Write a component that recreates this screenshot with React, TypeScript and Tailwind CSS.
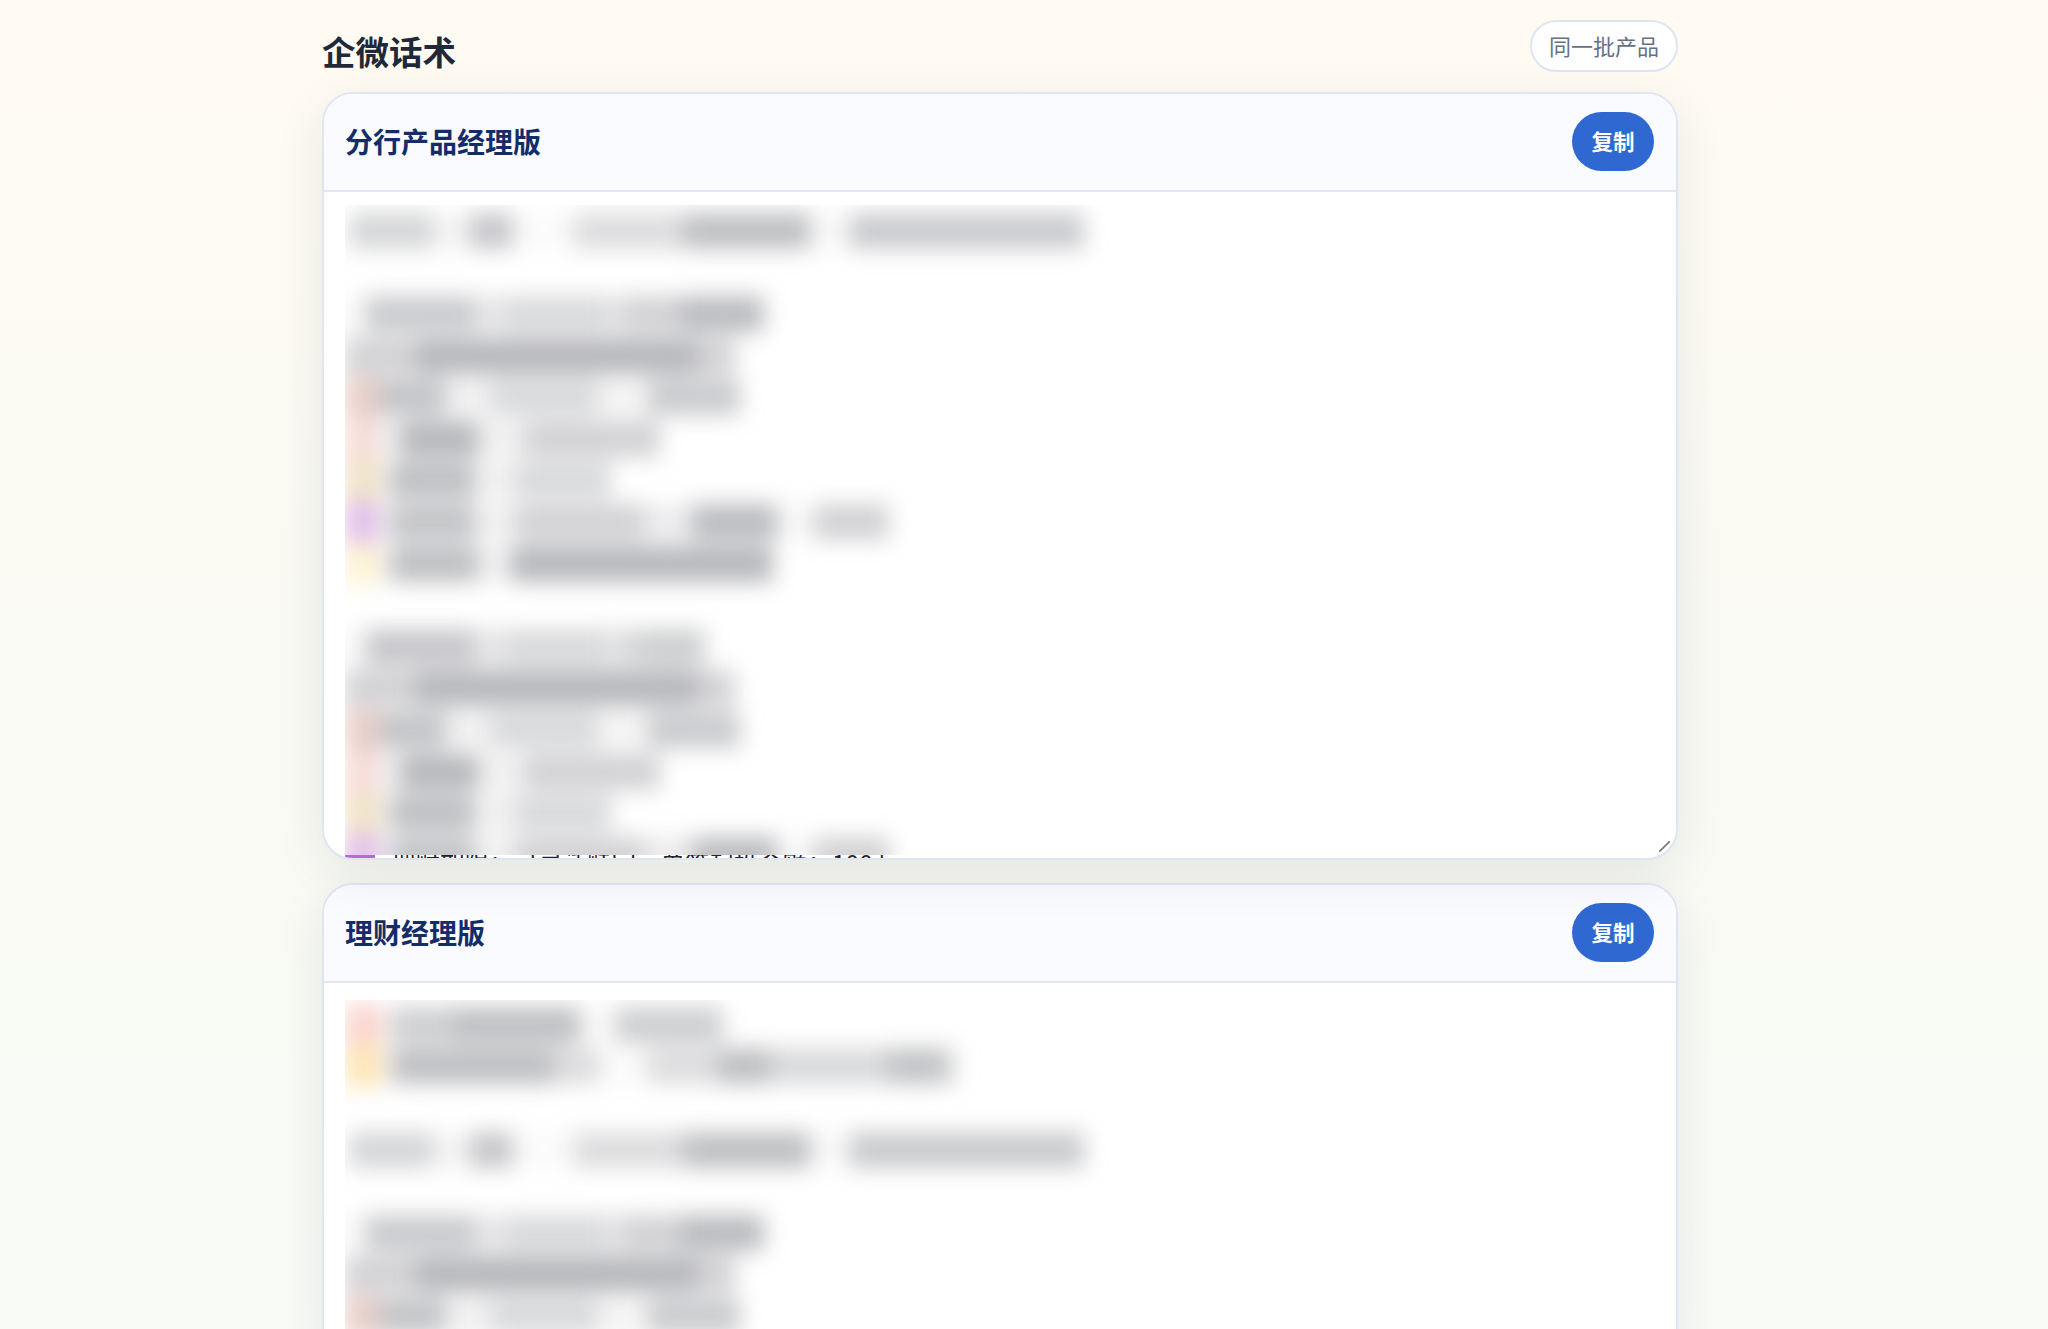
type Seg = [number, number, string?];

const headA: Seg[][] = [
  [[21, 0.1], [108, 0.7], [33, 0.35], [100, 0.5], [16, 0.35], [58, 0.6], [83, 0.9]],
  [[71, 0.6], [282, 0.95], [37, 0.6]],
  [[34, 0.1, "#e8cfc9"], [66, 0.8], [46, 0.2], [107, 0.5], [50, 0.15], [92, 0.7]],
  [[34, 0, "#f8dcd9"], [21, 0.2], [78, 0.95], [46, 0.2], [136, 0.6]],
  [[34, 0, "#f0e3c6"], [12, 0.2], [83, 0.85], [41, 0.2], [96, 0.5]],
  [[34, 0, "#e2bfea"], [12, 0.15], [84, 0.8], [40, 0.2], [129, 0.6], [48, 0.25], [85, 0.9], [37, 0.1], [75, 0.6]],
  [[34, 0, "#fdf3d3"], [12, 0.15], [87, 0.85], [33, 0.2], [262, 0.95]],
];

const headB: Seg[][] = [
  [[21, 0.1], [108, 0.75], [33, 0.35], [100, 0.5], [16, 0.35], [22, 0.55], [60, 0.65]],
  [[71, 0.6], [282, 0.95], [37, 0.6]],
  [[34, 0.1, "#e8cfc9"], [66, 0.8], [46, 0.2], [107, 0.5], [50, 0.15], [92, 0.7]],
  [[34, 0, "#f8dcd9"], [21, 0.2], [78, 0.95], [46, 0.2], [136, 0.6]],
  [[34, 0, "#f0e3c6"], [12, 0.2], [83, 0.85], [41, 0.2], [96, 0.5]],
  [[34, 0, "#e2bfea"], [12, 0.15], [84, 0.8], [40, 0.2], [129, 0.6], [48, 0.25], [85, 0.9], [37, 0.1], [75, 0.6]],
];

const firstLine: Seg[] = [[5, 0], [83, 0.55], [37, 0.15], [43, 0.75], [60, 0.05], [110, 0.45], [127, 0.85], [40, 0.1], [234, 0.7]];

const rows1: Seg[][] = [firstLine, [], ...headA, [], ...headB];

const rows2: Seg[][] = [
  [[37, 0, "#fbd5cf"], [10, 0.1], [61, 0.65], [127, 0.85], [36, 0.1], [107, 0.65]],
  [[37, 0, "#fde6b6"], [10, 0.1], [163, 0.85], [45, 0.45], [47, 0.05], [71, 0.45], [52, 0.85], [116, 0.5], [62, 0.8], [10, 0.3]],
  [],
  firstLine,
  [],
  [[21, 0.1], [108, 0.7], [33, 0.35], [100, 0.5], [16, 0.35], [58, 0.6], [83, 0.9]],
  [[71, 0.6], [282, 0.95], [37, 0.6]],
  [[34, 0.1, "#e8cfc9"], [66, 0.8], [46, 0.2], [107, 0.5], [50, 0.15], [92, 0.7]],
];

function Rows({ rows }: { rows: Seg[][] }) {
  return (
    <div className="blur-[11px]">
      {rows.map((r, i) => (
        <div key={i} className="flex h-[41.6px] items-center">
          {r.map(([w, a, c], j) => (
            <span
              key={j}
              className={c ? "h-[42px]" : "h-[36px]"}
              style={{ width: w, background: c ?? `rgba(110,112,120,${a * 0.52})` }}
            />
          ))}
        </div>
      ))}
    </div>
  );
}

function Header({ title }: { title: string }) {
  return (
    <div className="flex h-[98px] items-center justify-between border-b-2 border-[#dfe7f4] bg-[#fafbff] pb-[1px] pl-[21px] pr-[22px]">
      <h2 className="pb-[1px] text-[28px] font-bold text-[#142d68]">{title}</h2>
      <button className="h-[59px] w-[82px] rounded-full bg-[#3068d2] text-[21.5px] font-bold text-white">复制</button>
    </div>
  );
}

export default function App() {
  return (
    <div
      className="h-[1329px] overflow-hidden bg-gradient-to-b from-[#fffbf2] via-[#f9faf3] to-[#f9fbf7] pl-[322px]"
      style={{ fontFamily: '"Noto Sans CJK SC", "Liberation Sans", sans-serif' }}
    >
      <div className="w-[1356px]">
        <div className="flex h-[92px] items-start justify-between">
          <h1 className="mt-[28px] text-[33.5px] leading-[46px] font-bold text-[#1f2937]">企微话术</h1>
          <span className="mt-[20px] flex h-[52px] w-[148px] items-center justify-center rounded-full border-2 border-[#dfe6f3] bg-white pb-[2px] text-[22px] text-[#667085]">同一批产品</span>
        </div>

        <section className="relative h-[768px] overflow-hidden rounded-[31px] border-2 border-[#dfe6f3] bg-white shadow-[0_14px_50px_rgba(20,30,50,0.09)]">
          <Header title="分行产品经理版" />
          <div className="ml-[21px] mt-[13px] h-[650px] overflow-hidden">
            <div className="mt-[5px]">
              <Rows rows={rows1} />
            </div>
          </div>
          <div className="ml-[21px] flex h-[3px] items-start overflow-hidden text-[24.5px] leading-[30px] text-[#222]">
            <span className="h-[3px] w-[30px] bg-[#b868dc]" />
            <span className="ml-[16px] -translate-y-[7px] whitespace-nowrap">理财期限：可灵活赎回，单笔起投金额：100万</span>
          </div>
          <svg className="absolute bottom-[6px] right-[6px] h-[11px] w-[11px]" viewBox="0 0 11 11">
            <path d="M0 11L11 0" stroke="#777" strokeWidth="1.6" />
          </svg>
        </section>

        <section className="mt-[23px] h-[700px] overflow-hidden rounded-[31px] border-2 border-[#dfe6f3] bg-white shadow-[0_14px_50px_rgba(20,30,50,0.09)]">
          <Header title="理财经理版" />
          <div className="ml-[21px] mt-[17px] h-[400px] overflow-hidden">
            <div className="mt-[4px]">
              <Rows rows={rows2} />
            </div>
          </div>
        </section>
      </div>
    </div>
  );
}
